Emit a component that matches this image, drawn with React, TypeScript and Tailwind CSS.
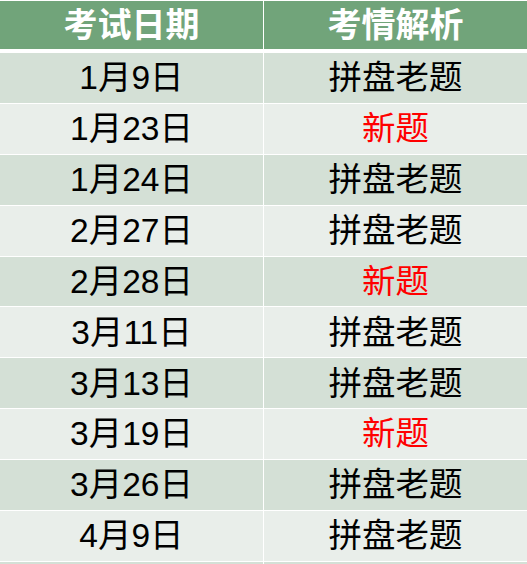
const rows: { date: string; note: string; isNew?: boolean }[] = [
  { date: "1月9日", note: "拼盘老题" },
  { date: "1月23日", note: "新题", isNew: true },
  { date: "1月24日", note: "拼盘老题" },
  { date: "2月27日", note: "拼盘老题" },
  { date: "2月28日", note: "新题", isNew: true },
  { date: "3月11日", note: "拼盘老题" },
  { date: "3月13日", note: "拼盘老题" },
  { date: "3月19日", note: "新题", isNew: true },
  { date: "3月26日", note: "拼盘老题" },
  { date: "4月9日", note: "拼盘老题" },
];

export default function App() {
  return (
    <div
      className="w-[527px] h-[564px] overflow-hidden bg-white pt-px"
      style={{ fontFamily: '"Liberation Sans", "Noto Sans CJK SC", sans-serif' }}
    >
      <div className="grid grid-cols-[263px_263px] gap-x-px h-[48px]">
        <div className="bg-[#71a47a] flex items-center justify-center text-white font-bold text-[34px] leading-none">
          考试日期
        </div>
        <div className="bg-[#71a47a] flex items-center justify-center text-white font-bold text-[34px] leading-none">
          考情解析
        </div>
      </div>
      <div className="mt-[4px] flex flex-col gap-y-px">
        {rows.map((r, i) => (
          <div key={i} className="grid grid-cols-[263px_263px] gap-x-px h-[49.9px] shrink-0">
            <div
              className={`${i % 2 === 0 ? "bg-[#d4e0d6]" : "bg-[#e9eeea]"} flex items-center justify-center text-black text-[33.5px] leading-none`}
            >
              {r.date}
            </div>
            <div
              className={`${i % 2 === 0 ? "bg-[#d4e0d6]" : "bg-[#e9eeea]"} flex items-center justify-center text-[33.5px] leading-none ${r.isNew ? "text-[#ff0000]" : "text-black"}`}
            >
              {r.note}
            </div>
          </div>
        ))}
        <div className="grid grid-cols-[263px_263px] gap-x-px h-[10px] shrink-0">
          <div className="bg-[#d4e0d6]" />
          <div className="bg-[#d4e0d6]" />
        </div>
      </div>
    </div>
  );
}
